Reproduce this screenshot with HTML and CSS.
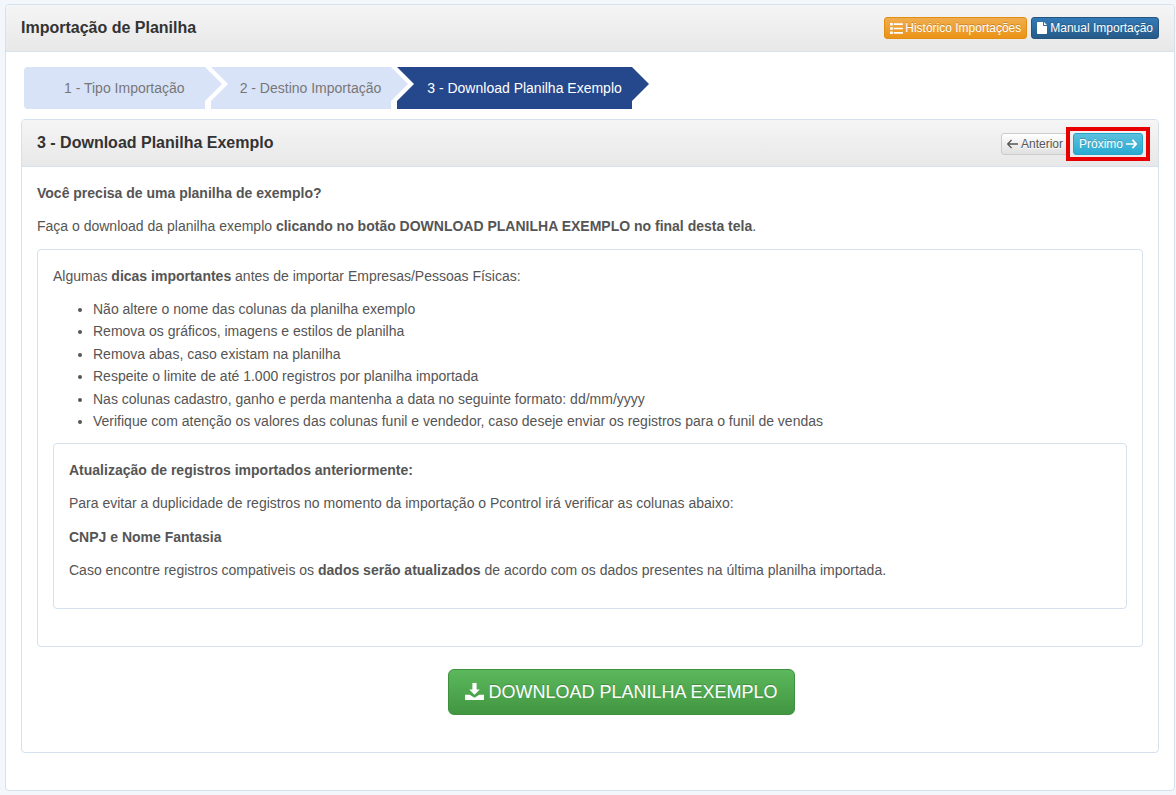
FILE: index.html
```html
<!DOCTYPE html>
<html lang="pt-BR">
<head>
<meta charset="utf-8">
<title>Importação de Planilha</title>
<link rel="stylesheet" href="styles.css">
</head>
<body>
<section class="panel outer">
  <header class="panel-heading outer-heading">
    <h1 class="title">Importação de Planilha</h1>
    <div class="actions">
      <a class="btn btn-warning"><svg class="ico" viewBox="0 0 14 12"><path d="M0 0h3v2.800H0zM0 4.600h3v2.800H0zM0 9.200h3V12H0zM4 .4h10v1.800H4zM4 5.100h10v1.800H4zM4 9.800h10v1.800H4z"/></svg>Histórico Importações</a>
      <a class="btn btn-primary"><svg class="ico ico-file" viewBox="0 0 10 12"><path d="M0 .8C0 .3.3 0 .8 0H6v3.200c0 .5.3.8.8.8H10v7.200c0 .5-.3.8-.8.8H.8c-.5 0-.8-.3-.8-.8zM7 0l3 3H7z"/></svg>Manual Importação</a>
    </div>
  </header>
  <div class="outer-body">
    <nav class="steps">
      <a class="step step-first">1 - Tipo Importação</a>
      <a class="step">2 - Destino Importação</a>
      <a class="step step-active">3 - Download Planilha Exemplo</a>
    </nav>
    <section class="panel inner">
      <header class="panel-heading inner-heading">
        <h2 class="title">3 - Download Planilha Exemplo</h2>
        <div class="pager">
          <a class="btn btn-default"><svg class="arrow" viewBox="0 0 12 10"><path d="M5 .5.800 5 5 9.500M1 5h11" fill="none" stroke="currentColor" stroke-width="1.500"/></svg>Anterior</a>
          <a class="btn btn-info">Próximo<svg class="arrow arrow-right" viewBox="0 0 12 10"><path d="M7 .5 11.200 5 7 9.500M0 5h11" fill="none" stroke="currentColor" stroke-width="1.900"/></svg><span class="highlight"></span></a>
        </div>
      </header>
      <div class="inner-body">
        <p><b>Você precisa de uma planilha de exemplo?</b></p>
        <p>Faça o download da planilha exemplo <b>clicando no botão DOWNLOAD PLANILHA EXEMPLO no final desta tela</b>.</p>
        <div class="well">
          <p>Algumas <b>dicas importantes</b> antes de importar Empresas/Pessoas Físicas:</p>
          <ul>
            <li>Não altere o nome das colunas da planilha exemplo</li>
            <li>Remova os gráficos, imagens e estilos de planilha</li>
            <li>Remova abas, caso existam na planilha</li>
            <li>Respeite o limite de até 1.000 registros por planilha importada</li>
            <li>Nas colunas cadastro, ganho e perda mantenha a data no seguinte formato: dd/mm/yyyy</li>
            <li>Verifique com atenção os valores das colunas funil e vendedor, caso deseje enviar os registros para o funil de vendas</li>
          </ul>
          <div class="well well-nested">
            <p><b>Atualização de registros importados anteriormente:</b></p>
            <p>Para evitar a duplicidade de registros no momento da importação o Pcontrol irá verificar as colunas abaixo:</p>
            <p><b>CNPJ e Nome Fantasia</b></p>
            <p>Caso encontre registros compativeis os <b>dados serão atualizados</b> de acordo com os dados presentes na última planilha importada.</p>
          </div>
        </div>
        <div class="download-row">
          <a class="btn btn-success btn-lg"><svg class="ico-download" viewBox="0 0 18 16"><path d="M7 0h4v6h3L9 11 4 6h3zM0 11h4.500L9 14l4.500-3H18v4c0 .6-.4 1-1 1H1c-.6 0-1-.4-1-1z"/></svg>DOWNLOAD PLANILHA EXEMPLO</a>
        </div>
      </div>
    </section>
  </div>
</section>
</body>
</html>
```
FILE: styles.css
```css
* { box-sizing: border-box; }
html, body { height: 100%; }
body {
  margin: 0;
  padding: 4px 1px 0 5px;
  background: #f3f7fb;
  color: #555;
  font: 14px/22.4px "Liberation Sans", Arial, sans-serif;
  overflow: hidden;
}
p { margin: 0 0 11px; }
b { font-weight: 700; }
.panel {
  background: #fff;
  border: 1px solid #d5e1ec;
  border-radius: 4px;
}
.outer { height: 787px; }
.panel-heading {
  display: flex;
  align-items: center;
  justify-content: space-between;
  background: linear-gradient(#f5f5f5, #e8e8e8);
  border-bottom: 1px solid #d5e1ec;
  border-radius: 3px 3px 0 0;
}
.title { margin: 0; font-size: 16px; line-height: 18px; font-weight: 700; color: #333; }
.outer-heading { height: 47px; padding: 0 15px; }
.actions { display: flex; gap: 4px; }
.outer-body { padding: 15px 15px 0; }
.btn {
  display: inline-flex;
  align-items: center;
  height: 22px;
  padding: 0 5px;
  border: 1px solid transparent;
  border-radius: 3px;
  font-size: 12px;
  line-height: 18px;
  color: #fff;
  white-space: nowrap;
  text-shadow: 0 -1px 0 rgba(0,0,0,.2);
}
.btn-warning { background: linear-gradient(#f0ad4e, #eb9316); border-color: #e38d13; }
.btn-primary { background: linear-gradient(#337ab7, #265a88); border-color: #245580; }
.btn-info { position: relative; background: linear-gradient(#5bc0de, #2aabd2); border-color: #28a4c9; }
.btn-default { background: linear-gradient(#fff, #e0e0e0); border-color: #ccc; color: #555; text-shadow: 0 1px 0 #fff; }
.btn-success { background: linear-gradient(#5cb85c, #419641); border-color: #3e8f3e; }
.btn-lg { width: 347px; justify-content: center; height: 46px; padding: 0 16px; border-radius: 6px; font-size: 18px; line-height: 24px; }
.ico { width: 13px; height: 11px; margin-right: 2px; fill: #fff; }
.ico-file { width: 10px; height: 12px; margin-right: 3px; }
.arrow { width: 11px; height: 10px; margin-right: 3px; }
.arrow-right { margin: 0 0 0 3px; }
.ico-download { width: 19px; height: 17px; margin-right: 4px; fill: #fff; }
.highlight {
  position: absolute;
  top: -7px;
  left: -8px;
  right: -8px;
  bottom: -7px;
  border: 4px solid #e80000;
  pointer-events: none;
}
.steps { display: flex; gap: 6px; height: 42px; padding-left: 3px; color: #777; }
.step {
  position: relative;
  display: flex;
  align-items: center;
  padding: 0 10px 0 29px;
  background: #d9e3f7;
  line-height: 42px;
  white-space: nowrap;
}
.step::before {
  content: "";
  position: absolute;
  left: 0;
  top: 0;
  border-left: 17px solid #fff;
  border-top: 17.500px solid transparent;
  border-bottom: 17.500px solid transparent;
}
.step::after {
  content: "";
  position: absolute;
  z-index: 1;
  left: 100%;
  top: 0;
  border-left: 17px solid #d9e3f7;
  border-top: 17.500px solid transparent;
  border-bottom: 17.500px solid transparent;
}
.step-first { padding: 0 20px 0 40px; border-radius: 4px 0 0 4px; }
.step-first::before { display: none; }
.step-active { background: #25478c; color: #fff; padding-left: 30px; }
.step-active::after { border-left-color: #25478c; }
.inner { margin-top: 10px; height: 634px; }
.inner-heading { height: 47px; padding: 0 15px; }
.pager { display: flex; gap: 4px; margin-top: 1px; }
.inner-body { padding: 15px; }
.well {
  padding: 15px;
  border: 1px solid #d5e1ec;
  border-radius: 4px;
  height: 398px;
  margin-top: 11px;
}
.well ul { margin: -0.2px 0 10.200px; padding-left: 40px; }
.well-nested { height: 166px; margin-top: 0; padding-top: 15.100px; }
.download-row { display: flex; justify-content: center; margin-top: 22px; padding-left: 63px; }
```
